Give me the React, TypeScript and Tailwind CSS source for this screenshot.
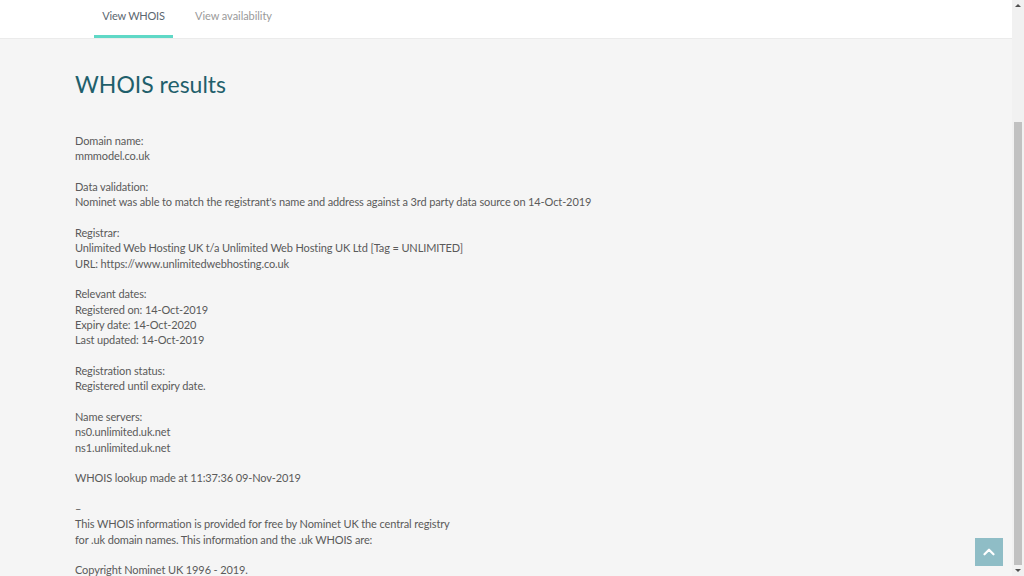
import { ChevronUp } from "lucide-react";

const LINES: string[] = [
  "Domain name:",
  "mmmodel.co.uk",
  "",
  "Data validation:",
  "Nominet was able to match the registrant's name and address against a 3rd party data source on 14-Oct-2019",
  "",
  "Registrar:",
  "Unlimited Web Hosting UK t/a Unlimited Web Hosting UK Ltd [Tag = UNLIMITED]",
  "URL: https://www.unlimitedwebhosting.co.uk",
  "",
  "Relevant dates:",
  "Registered on: 14-Oct-2019",
  "Expiry date: 14-Oct-2020",
  "Last updated: 14-Oct-2019",
  "",
  "Registration status:",
  "Registered until expiry date.",
  "",
  "Name servers:",
  "ns0.unlimited.uk.net",
  "ns1.unlimited.uk.net",
  "",
  "WHOIS lookup made at 11:37:36 09-Nov-2019",
  "",
  "–",
  "This WHOIS information is provided for free by Nominet UK the central registry",
  "for .uk domain names. This information and the .uk WHOIS are:",
  "",
  "Copyright Nominet UK 1996 - 2019.",
];

export default function App() {
  return (
    <div className="flex h-screen w-full overflow-hidden bg-[#f5f5f5] font-['Lato',sans-serif]">
      <div className="relative flex min-w-0 flex-1 flex-col">
        <header className="flex h-[39px] shrink-0 border-b border-[#ebebeb] bg-white pl-[94px]">
          <button className="h-full w-[79px] border-b-[3px] border-[#5fd8c6] pb-[2px] text-[11px] tracking-[-0.2px] text-[#5b6770]">
            View WHOIS
          </button>
          <button className="ml-[22px] h-full pb-[5px] text-[11px] tracking-[-0.05px] text-[#9a9a9a]">
            View availability
          </button>
        </header>

        <main className="flex-1 pl-[75px]">
          <h1 className="mt-[30px] text-[23px] leading-[30px] text-[#1f5f6b]">WHOIS results</h1>
          <div className="mt-[34px] text-[11px] leading-[15.33px] tracking-[-0.12px] text-[#5a5a5a]">
            {LINES.map((line, i) => (
              <div key={i} className="h-[15.33px] whitespace-pre">
                {line}
              </div>
            ))}
          </div>
        </main>

        <button className="absolute bottom-[10px] right-[9px] flex h-[28px] w-[28px] items-center justify-center bg-[#8fbdc6] text-white">
          <ChevronUp size={18} strokeWidth={3} />
        </button>
      </div>

      <div className="flex w-[12px] shrink-0 flex-col items-center bg-[#f1f1f1]">
        <div className="mt-[4px] h-0 w-0 border-x-[3px] border-b-[3px] border-x-transparent border-b-[#505050]" />
        <div className="mt-[115px] w-[8px] flex-1 bg-[#c1c1c1]" />
        <div className="mb-[4px] mt-[4px] h-0 w-0 border-x-[3px] border-t-[3px] border-x-transparent border-t-[#505050]" />
      </div>
    </div>
  );
}
